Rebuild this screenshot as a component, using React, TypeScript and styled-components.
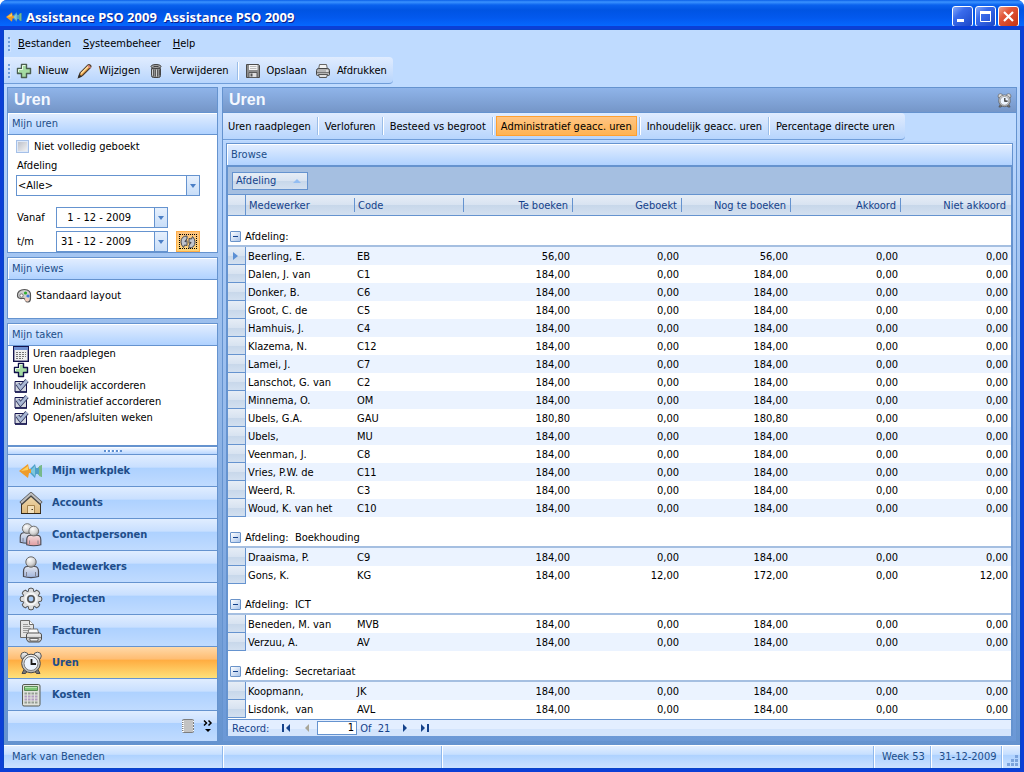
import React from "react";
import styled, { createGlobalStyle, css } from "styled-components";

const line = "#6593cf";
const ink = "#204d89";
const uiFont = '"DejaVu Sans Condensed", "DejaVu Sans", Tahoma, sans-serif';

const GlobalStyle = createGlobalStyle`
  * { box-sizing: border-box; }
  body { margin: 0; background: #fff; font: 11px/14px ${uiFont}; color: #000; }
  button, input, select { font: inherit; color: inherit; margin: 0; }
  button { cursor: default; }
  svg { display: block; flex: none; }
`;

/* ---------- window frame ---------- */

const Window = styled.div`
  display: flex;
  flex-direction: column;
  min-height: 100vh;
  border-radius: 7px 7px 0 0;
  overflow: hidden;
  background: #0a4ee4;
`;

const TitleBar = styled.header`
  display: flex;
  align-items: center;
  height: 30px;
  padding: 3px 5px 0 6px;
  background: linear-gradient(#0a5fe8 0, #3b93ff 2px, #0a62ee 5px, #0054e3 10px, #0359ee 18px, #0568ff 26px, #0450d8 30px);
`;

const TitleText = styled.h1`
  flex: 1;
  margin: 0 0 0 4px;
  font: 700 13px/18px "Noto Sans", sans-serif;
  color: #fff;
  text-shadow: 1px 1px 0 #0a1f8c;
  white-space: pre;
`;

const Caption = styled.button<{ $close?: boolean }>`
  display: grid;
  place-items: center;
  width: 21px;
  height: 21px;
  margin-left: 2px;
  padding: 0;
  border: 1px solid #fff;
  border-radius: 3px;
  background: ${(p) =>
    p.$close
      ? "linear-gradient(135deg, #f0a088 0, #e2573a 35%, #c63312 100%)"
      : "linear-gradient(135deg, #86a9f8 0, #3a6cec 35%, #1c48c8 100%)"};
`;

const Client = styled.div`
  display: flex;
  flex-direction: column;
  flex: 1;
  margin: 0 4px 4px;
  background: #bfdbff;
  box-shadow: 0 0 0 1px #0844c8, 0 0 0 4px #0b3fd6;
`;

const Grip = styled.i<{ $gap: number }>`
  width: 2px;
  height: 14px;
  margin-right: ${(p) => p.$gap}px;
  background: repeating-linear-gradient(#6f9dd9 0 2px, transparent 2px 4px);
  box-shadow: 1px 1px 0 #e6f0ff66;
`;

const MenuBar = styled.nav`
  display: flex;
  align-items: center;
  height: 27px;
  padding-left: 4px;
`;

const MenuItem = styled.button`
  margin-right: 12px;
  padding: 0;
  border: 0;
  background: none;
`;

const barFace = "linear-gradient(#e0ecff 0, #cfe2fd 45%, #b7d5fd 100%)";

const ToolBar = styled.div`
  display: flex;
  align-items: center;
  align-self: flex-start;
  height: 27px;
  margin-bottom: 3px;
  padding: 1px 6px 0 4px;
  border-bottom: 1px solid #6f9dd9;
  border-radius: 0 4px 4px 0;
  background: ${barFace};
`;

const ToolButton = styled.button`
  display: flex;
  align-items: center;
  gap: 6px;
  height: 22px;
  margin-right: 8px;
  padding: 0;
  border: 0;
  background: none;
  &:last-child { margin-right: 0; }
`;

const Divider = styled.i`
  width: 2px;
  height: 18px;
  margin-right: 6px;
  border-left: 1px solid #9abde8;
  background: #fff;
`;

/* ---------- body ---------- */

const Body = styled.div`
  display: flex;
  flex: 1;
  gap: 4px;
  padding: 0 3px 4px;
  background: linear-gradient(#bad7fe, #6593cf);
`;

const Sidebar = styled.aside`
  display: flex;
  flex-direction: column;
  width: 211px;
  flex: none;
`;

const PanelHeader = styled.header`
  display: flex;
  align-items: center;
  justify-content: space-between;
  height: 26px;
  padding: 0 4px 0 6px;
  border: 1px solid ${line};
  background: linear-gradient(#8fb4e9, #7596c8);
  h2 {
    margin: 0;
    font: 700 16px/22px "Liberation Sans", Arial, sans-serif;
    color: #f4f8ff;
  }
`;

const Group = styled.section<{ $first?: boolean; $grow?: boolean }>`
  border: 1px solid ${line};
  background: #fff;
  ${(p) => (p.$first ? "border-top: 0;" : "margin-top: 4px;")}
  ${(p) => p.$grow && css`
    flex: 1;
    border-bottom-width: 2px;
  `}
`;

const GroupTitle = styled.h3`
  margin: 0;
  height: 22px;
  padding: 0 4px;
  border-bottom: 1px solid ${line};
  background: linear-gradient(#e3eeff, #b0d2ff);
  box-shadow: inset 1px 1px 0 #fff;
  font: 11px/21px ${uiFont};
  color: ${ink};
`;

const Filters = styled.form`
  display: flex;
  flex-direction: column;
  height: 117px;
  padding: 5px 17px 0 8px;
`;

const CheckLine = styled.label`
  display: flex;
  align-items: center;
  gap: 5px;
  height: 13px;
  input {
    appearance: none;
    width: 13px;
    height: 13px;
    border: 1px solid #a5c0e8;
    background: linear-gradient(135deg, #b8bcc6, #f6f6f6);
    background-clip: content-box;
    padding: 1px;
    box-shadow: inset 0 0 0 1px #dfe9f8;
  }
`;

const FieldLabel = styled.label`
  margin: 6px 0 2px 1px;
`;

const control = css`
  height: 21px;
  border: 1px solid ${line};
  background: #fff;
`;

const Combo = styled.div`
  ${control}
  display: flex;
  flex: none;
  position: relative;
  margin-bottom: 11px;
  select {
    appearance: none;
    flex: 1;
    padding: 0 1px;
    border: 0;
    background: none;
    outline: 0;
  }
  > span {
    position: absolute;
    right: 0;
    top: 0;
    pointer-events: none;
  }
`;

const Drop = styled.span`
  display: grid;
  place-items: center;
  width: 13px;
  height: 19px;
  border-left: 1px solid ${line};
  background: linear-gradient(#e6f0fd, #c9def8);
`;

const DateLine = styled.div`
  display: grid;
  grid-template-columns: 39px 112px 32px;
  align-items: center;
  margin: 0 0 3px 1px;
  &:last-child { margin-bottom: 0; }
`;

const DateBox = styled.div`
  ${control}
  display: flex;
  input {
    flex: 1;
    min-width: 0;
    padding: 0 4px;
    border: 0;
    background: none;
    outline: 0;
    white-space: pre;
  }
`;

const DropButton = styled.button`
  padding: 0;
  border: 0;
  background: none;
`;

const Refresh = styled.button`
  display: grid;
  place-items: center;
  width: 24px;
  height: 21px;
  margin-left: 8px;
  padding: 0;
  border: 1px solid #ffae48;
  background: linear-gradient(#ffc27c, #ffd678);
  outline: 1px dotted #000;
  outline-offset: -4px;
`;

const ViewBox = styled.div`
  height: 38px;
  padding: 8px;
`;

const ViewItem = styled.button`
  display: flex;
  align-items: center;
  gap: 4px;
  padding: 0;
  border: 0;
  background: none;
`;

const TaskList = styled.ul`
  list-style: none;
  margin: 0;
  padding: 0 5px;
`;

const TaskItem = styled.button`
  display: flex;
  align-items: center;
  gap: 4px;
  height: 16px;
  padding: 0;
  border: 0;
  background: none;
`;

const Splitter = styled.div`
  display: grid;
  place-items: center;
  height: 8px;
  border: solid ${line};
  border-width: 0 1px 1px;
  background: linear-gradient(#fff 0, #e3eeff 2px, #b9d7ff);
  i {
    width: 18px;
    height: 2px;
    background: repeating-linear-gradient(90deg, #5f8fd0 0 2px, #fff 2px 3px, transparent 3px 4px);
  }
`;

const blueFace = "linear-gradient(#e0edff 0, #c8dfff 40%, #add1ff 41%, #c0dbff 100%)";
const goldFace = "linear-gradient(#ffd9a8 0, #ffbc70 40%, #ffab3f 41%, #fee17a 100%)";

const NavButton = styled.button<{ $active?: boolean }>`
  display: flex;
  align-items: center;
  gap: 9px;
  width: 100%;
  height: 32px;
  padding: 0 11px;
  border: solid ${line};
  border-width: 0 1px 1px;
  background: ${(p) => (p.$active ? goldFace : blueFace)};
  font: 700 11px/14px ${uiFont};
  color: ${ink};
`;

const NavFooter = styled.div`
  display: flex;
  align-items: center;
  justify-content: flex-end;
  gap: 8px;
  height: 30px;
  padding-right: 4px;
  border: solid ${line};
  border-width: 0 1px;
  background: ${blueFace};
  button { padding: 0; border: 0; background: none; }
`;

/* ---------- main panel ---------- */

const Main = styled.main`
  display: flex;
  flex-direction: column;
  flex: 1;
  min-width: 0;
`;

const MainBody = styled.div`
  display: flex;
  flex-direction: column;
  flex: 1;
  padding-bottom: 5px;
  border: solid ${line};
  border-width: 0 1px;
  background: linear-gradient(#bdd9ff, #6b98d6);
`;

const TabStrip = styled.div`
  height: 28px;
  background: #bfdbff;
`;

const Tabs = styled.nav`
  display: flex;
  align-items: center;
  width: fit-content;
  height: 27px;
  padding: 0 6px 0 1px;
  border-bottom: 1px solid #6f9dd9;
  border-radius: 0 4px 4px 0;
  background: ${barFace};
`;

const Tab = styled.button<{ $active?: boolean }>`
  height: 20px;
  padding: 2px ${(p) => (p.$active ? 4 : 3)}px 0;
  border: 1px solid ${(p) => (p.$active ? "#ffa030" : "transparent")};
  background: ${(p) => (p.$active ? "linear-gradient(#ffc583, #ffb353)" : "none")};
  white-space: nowrap;
`;

const TabDivider = styled(Divider)`
  margin: 0 2px;
`;

const Browse = styled.section`
  display: flex;
  flex-direction: column;
  flex: 1;
  margin: 2px 3px 0;
  border: solid ${line};
  border-width: 1px 1px 0;
`;

const BrowseTitle = styled(GroupTitle)`
  height: 23px;
  border-bottom-width: 2px;
`;

const Grid = styled.div`
  flex: 1;
  display: flex;
  flex-direction: column;
  border: solid ${line};
  border-width: 0 1px;
  background: #fff;
`;

const GroupBy = styled.div`
  height: 28px;
  padding: 5px 4px;
  border-bottom: 1px solid ${line};
  background: #a5bfe1;
`;

const metal = "linear-gradient(#e6edf6 0, #d8e3f1 50%, #c7d7ea 51%, #d3e0f0 100%)";

const GroupKey = styled.button`
  display: flex;
  align-items: center;
  justify-content: space-between;
  width: 76px;
  height: 18px;
  padding: 0 6px 0 3px;
  border: 1px solid ${line};
  background: ${metal};
  color: #15428b;
`;

const Table = styled.table`
  width: 100%;
  table-layout: fixed;
  border-collapse: separate;
  border-spacing: 0;
  th, td { padding: 0; font-weight: 400; white-space: pre; }
`;

const HeadCell = styled.th<{ $num?: boolean; $first?: boolean; $last?: boolean }>`
  height: 21px;
  border-bottom: 1px solid ${line};
  background: ${metal};
  color: #15428b;
  text-align: ${(p) => (p.$num ? "right" : "left")};
  span {
    display: block;
    height: 14px;
    padding: 0 4px 0 3px;
    line-height: 16px;
    border-right: 1px solid ${(p) => (p.$last ? "transparent" : line)};
  }
  ${(p) => p.$first && `border-right: 1px solid ${line};`}
`;

const GroupCell = styled.td`
  height: 31px;
  border-bottom: 2px solid #a5bfe1;
  div {
    display: flex;
    align-items: center;
    gap: 4px;
    padding: 12px 0 0 2px;
  }
`;

const Expander = styled.button`
  display: grid;
  place-items: center;
  width: 11px;
  height: 11px;
  padding: 0;
  border: 1px solid #6a93c9;
  border-radius: 1px;
  background: linear-gradient(135deg, #fff, #a9c4ea);
  &::before { content: ""; width: 5px; height: 1px; background: #15428b; }
`;

const Row = styled.tr<{ $tint: boolean }>`
  background: ${(p) => (p.$tint ? "#ebf3ff" : "#fff")};
`;

const Marker = styled.td`
  height: 18px;
  border: solid ${line};
  border-width: 0 1px 1px 0;
  background: ${metal};
  svg { margin: 0 5px; }
`;

const Cell = styled.td<{ $num?: boolean }>`
  text-align: ${(p) => (p.$num ? "right" : "left")};
  && { padding: 2px 3px 0 ${(p) => (p.$num ? 0 : 2)}px; }
`;

const Pager = styled.footer`
  display: flex;
  align-items: center;
  height: 17px;
  margin-top: auto;
  padding-left: 4px;
  border-top: 1px solid ${line};
  background: linear-gradient(#e3eeff 55%, #d3e4fc 56%);
  color: #15428b;
  button { width: 9px; padding: 0; border: 0; background: none; }
  input {
    width: 40px;
    height: 14px;
    padding: 0 2px;
    border: 1px solid ${line};
    background: #fff;
    color: #000;
    text-align: right;
    outline: 0;
  }
`;

const PagerSlot = styled.span<{ $w: number }>`
  width: ${(p) => p.$w}px;
  padding-top: 1px;
  white-space: pre;
`;

/* ---------- status bar ---------- */

const StatusBar = styled.footer`
  display: flex;
  height: 23px;
  border-top: 1px solid #fff;
  background: linear-gradient(#e2eeff 0, #c6dfff 38%, #aed2ff 42%, #cbe1ff 100%);
  color: ${ink};
`;

const StatusCell = styled.div<{ $w?: number }>`
  display: flex;
  align-items: center;
  padding: 0 8px;
  border-right: 1px solid #8fb8ec;
  box-shadow: 1px 0 0 #fff;
  white-space: nowrap;
  ${(p) => (p.$w ? `width: ${p.$w}px;` : "flex: 1;")}
`;

const SizeGrip = styled.div`
  display: flex;
  align-items: flex-end;
  padding: 0 2px 2px 5px;
`;

/* ---------- icons ---------- */

const Logo = ({ w, h }: { w: number; h: number }) => (
  <svg width={w} height={h} viewBox="0 0 24 16">
    <path d="M15 8l5-4 3-2v12l-3-2z" fill="#4f9f68" />
    <path d="M20 3l3-1v12l-3-1z" fill="#77b98a" />
    <path d="M9 8l7-7 1 4h3v6h-3l-1 4z" fill="#4fa0c8" />
    <path d="M11 8l5-5v10z" fill="#7cc7df" />
    <path d="M0 8l9-7 1 5h2v4h-2l-1 5z" fill="#ee9c2b" />
    <path d="M2 8l7-5v4z" fill="#ffd25c" />
  </svg>
);

const PlusIcon = ({ dark }: { dark?: boolean }) => (
  <svg width="16" height="16" viewBox="0 0 16 16">
    <path
      d="M5.500 1.500h5v4h4v5h-4v4h-5v-4h-4v-5h4z"
      fill="#a5dba2"
      stroke={dark ? "#10104a" : "#4b5f50"}
      strokeWidth="1.400"
      strokeLinejoin="round"
    />
    <path d="M6.500 6.500v-4h3M2.500 9v-2.500h4" fill="none" stroke="#e8f9e4" />
  </svg>
);

const PencilIcon = () => (
  <svg width="16" height="16" viewBox="0 0 16 16">
    <path d="M1.500 14.500l1.500-4.500 8-8q1-1 2.300.2t.2 2.300l-8 8z" fill="#f0a94e" stroke="#4e3b2a" strokeWidth="1.200" />
    <path d="M4 10.500l7.500-7.500" stroke="#ffe0a3" strokeWidth="1.500" />
    <path d="M1 15l1.200-4 2.800 2.800z" fill="#2c2c2c" />
    <path d="M11 2.500l2.500 2.500" stroke="#d98080" strokeWidth="1.500" />
  </svg>
);

const TrashIcon = () => (
  <svg width="16" height="16" viewBox="0 0 16 16">
    <path d="M3.500 5.500h9v7q0 2-2 2h-5q-2 0-2-2z" fill="#8f8f8f" stroke="#444" />
    <path d="M5.500 6.500v7M7.500 6.500v7M9.500 6.500v7M11.500 6.500v6" stroke="#5a5a5a" />
    <path d="M4.500 6.500v6M8.500 6.500v7" stroke="#d0d0d0" />
    <ellipse cx="8" cy="3.500" rx="5" ry="2" fill="#aaa" stroke="#3e3e3e" />
    <path d="M5.500 3.500h5M6.500 1.500h3" stroke="#444" />
  </svg>
);

const SaveIcon = () => (
  <svg width="16" height="16" viewBox="0 0 16 16">
    <path d="M1.500 1.500h12l1 1v12h-13z" fill="#8d8d8d" stroke="#4c4c4c" />
    <path d="M4 2h8.500v5H4z" fill="#f5f5f5" />
    <path d="M5 3.500h6.500M5 5.500h6.500" stroke="#bbb" />
    <path d="M4 9.500h8v5H4z" fill="#dedede" stroke="#5a5a5a" />
    <path d="M5.500 10.500h2v3h-2z" fill="#555" />
  </svg>
);

const PrintIcon = () => (
  <svg width="16" height="16" viewBox="0 0 16 16">
    <path d="M4.500 1.500h7l1 5h-9z" fill="#f2f2f2" stroke="#666" />
    <path d="M1.500 7.500q0-2 2-2h9q2 0 2 2v4q0 1-1 1h-11q-1 0-1-1z" fill="#b5b5b5" stroke="#474747" />
    <path d="M2 9.500h12" stroke="#777" />
    <path d="M3.500 11.500h9l-1 3h-7z" fill="#e0e0e0" stroke="#555" />
    <path d="M11 8h2" stroke="#fff" />
  </svg>
);

const PaletteIcon = () => (
  <svg width="16" height="16" viewBox="0 0 16 16">
    <path
      d="M1.500 8C1 4 4 1.500 8.500 1.500s6.500 3 6 6c-.3 3 1 6-2.500 6.500-3 .3-2-3-4-3.500S2 12 1.500 8z"
      fill="#cfcfcf"
      stroke="#555"
      strokeWidth="1.200"
    />
    <circle cx="5.500" cy="7.500" r="1.700" fill="#fff" stroke="#777" />
    <circle cx="9.500" cy="5" r="1.600" fill="#2fae2f" />
    <circle cx="12" cy="8" r="1.600" fill="#3e7be0" />
    <circle cx="11" cy="11.500" r="2" fill="#f3cdbb" />
  </svg>
);

const CalendarIcon = () => (
  <svg width="16" height="16" viewBox="0 0 16 16">
    <rect x=".7" y=".7" width="14.600" height="14.600" fill="#f0f0f0" stroke="#14144e" strokeWidth="1.400" />
    <path d="M1 1h14v3H1z" fill="#6d8fd2" />
    <path d="M3 6.500h10M3 8.500h10M3 10.500h10M3 12.500h7" stroke="#777" strokeDasharray="2 1" />
  </svg>
);

const CheckIcon = () => (
  <svg width="16" height="16" viewBox="0 0 16 16">
    <path d="M2 3.500h11.500v10.500H2z" fill="#d3d7df" stroke="#14144e" />
    <path d="M2 14h12" stroke="#14144e" strokeWidth="1.500" />
    <path d="M4.500 6l3 4 6.500-7.500" fill="none" stroke="#30355e" strokeWidth="4.400" />
    <path d="M4.500 6l3 4 6.500-7.500" fill="none" stroke="#a9b8d4" strokeWidth="2.800" />
  </svg>
);

const RefreshIcon = () => (
  <svg width="16" height="14" viewBox="0 0 16 14">
    <path
      d="M7 1q-6 0-6 6 0 3 2.500 5.500l1-2.500 2.500.5V5.500L5 7q0-2 2-3zM9 13q6 0 6-6 0-3-2.500-5.500L11.500 4 9 3.500v5L11 7q0 2-2 3z"
      fill="#c0c4cc"
      stroke="#414652"
    />
  </svg>
);

const Shades = () => (
  <defs>
    <radialGradient id="pearl" cx=".38" cy=".3" r=".75">
      <stop offset="0" stopColor="#fdfdfd" />
      <stop offset=".6" stopColor="#d4d4d4" />
      <stop offset="1" stopColor="#8e8e8e" />
    </radialGradient>
    <linearGradient id="steel" x1="0" y1="0" x2="0" y2="1">
      <stop offset="0" stopColor="#f4f4f4" />
      <stop offset="1" stopColor="#b0b0b0" />
    </linearGradient>
    <linearGradient id="blueCoat" x1="0" y1="0" x2="0" y2="1">
      <stop offset="0" stopColor="#e3e6ee" />
      <stop offset="1" stopColor="#9fb4dc" />
    </linearGradient>
    <linearGradient id="redCoat" x1="0" y1="0" x2="0" y2="1">
      <stop offset="0" stopColor="#f2dede" />
      <stop offset="1" stopColor="#e29a9f" />
    </linearGradient>
    <linearGradient id="wall" x1="0" y1="0" x2="0" y2="1">
      <stop offset="0" stopColor="#f2dcb2" />
      <stop offset="1" stopColor="#dcb87c" />
    </linearGradient>
  </defs>
);

const SharedShades = styled.svg`
  position: absolute;
  width: 0;
  height: 0;
`;

const HouseIcon = () => (
  <svg width="24" height="24" viewBox="0 0 24 24">
    <path d="M2.500 11.500L12 3l9.500 8.500v11h-19z" fill="url(#wall)" stroke="#3f3220" />
    <path d="M1.800 12.500L12 3.200l10.200 9.300" fill="none" stroke="#474747" strokeWidth="4" strokeLinejoin="round" />
    <path d="M2 11.700L12 2.800l10 8.900" fill="none" stroke="#bdbdbd" strokeWidth="2.200" strokeLinejoin="round" />
    <path d="M8.500 14.500h7v8h-7z" fill="#f3e0bb" stroke="#a5834c" />
    <path d="M12.500 18.500h1.500" stroke="#4a3a20" />
    <path d="M2 22.500h20" stroke="#2f2516" />
  </svg>
);

const Person = ({ coat }: { coat: string }) => (
  <>
    <path d="M4.500 21.500v-5q0-5 4-5h7q4 0 4 5v5q-7.500 2.200-15 0z" fill={`url(#${coat})`} stroke="#4a4a52" strokeWidth="1.200" />
    <path d="M7.500 21v-4M16.500 21v-4" stroke="#80808c" />
    <circle cx="12" cy="7" r="5.200" fill="url(#pearl)" stroke="#6a6a6a" />
  </>
);

const PersonIcon = () => (
  <svg width="24" height="24" viewBox="0 0 24 24"><Person coat="blueCoat" /></svg>
);

const PeopleIcon = () => (
  <svg width="24" height="24" viewBox="0 0 24 24">
    <g transform="translate(-3 -1) scale(.94)"><Person coat="blueCoat" /></g>
    <g transform="translate(3.500 1.500) scale(.94)"><Person coat="redCoat" /></g>
  </svg>
);

const GearIcon = () => (
  <svg width="24" height="24" viewBox="0 0 24 24">
    {[0, 45, 90, 135, 180, 225, 270, 315].map((a) => (
      <path
        key={a}
        d="M9 6l.8-4.300q2.200-1.200 4.400 0L15 6z"
        fill="#dedede"
        stroke="#555"
        transform={`rotate(${a} 12 12)`}
      />
    ))}
    <circle cx="12" cy="12" r="7.800" fill="#dcdcdc" />
    <circle cx="12" cy="12" r="5.500" fill="none" stroke="#f6f6f6" strokeWidth="2" />
    <circle cx="12" cy="12" r="3.200" fill="#a9ccf8" stroke="#555" strokeWidth="1.600" />
  </svg>
);

const InvoiceIcon = () => (
  <svg width="24" height="24" viewBox="0 0 24 24">
    <path d="M1.500 1.500h9l4 4v13h-13z" fill="#e4e4e4" stroke="#6b6b6b" />
    <path d="M10.500 1.500v4h4" fill="#fff" stroke="#6b6b6b" />
    <path d="M4 5.500h5M4 7.500h7M4 9.500h8M4 11.500h6M4 13.500h4" stroke="#9a9a9a" />
    <path d="M10 10h8.500l1.500 5.500H8.500z" fill="#fafafa" stroke="#777" />
    <path d="M7.500 16q0-2 2-2h11q2 0 2 2v4.500L20.500 23H9.500l-2-2.500z" fill="url(#steel)" stroke="#4f4f4f" />
    <path d="M8 18.500h14" stroke="#808080" />
    <path d="M10.500 19.500h9l-1 2.500h-7z" fill="#f2f2f2" stroke="#6b6b6b" />
  </svg>
);

const ClockIcon = ({ size = 24 }: { size?: number }) => (
  <svg width={size} height={size} viewBox="0 0 24 24">
    <path d="M5 18.500l-2 4h3.500l2-2.500M19 18.500l2 4h-3.500l-2-2.500" fill="#777" stroke="#484848" />
    <circle cx="5.500" cy="5" r="3.800" fill="url(#steel)" stroke="#5a5a5a" />
    <circle cx="18.500" cy="5" r="3.800" fill="url(#steel)" stroke="#5a5a5a" />
    <circle cx="12" cy="12.500" r="9.300" fill="url(#steel)" stroke="#4a4a4a" />
    <circle cx="12" cy="12.500" r="7" fill="#eef5ff" stroke="#7a7a7a" />
    <path d="M12.500 8v5H17" fill="none" stroke="#1c1c1c" strokeWidth="1.800" />
  </svg>
);

const CalculatorIcon = () => (
  <svg width="24" height="24" viewBox="0 0 24 24">
    <rect x="3.500" y="1.500" width="17.500" height="21.500" rx="1.500" fill="#dfe2dc" stroke="#565b53" />
    <path d="M5.500 3.500h13v4h-13z" fill="#7cc675" stroke="#5a8a56" />
    <path d="M6 4.500h12" stroke="#b5e5af" />
    {[10.5, 13.5, 16.5, 19.5].map((y) => (
      <path
        key={y}
        d={`M5.500 ${y}h13`}
        stroke={y === 13.5 || y === 16.5 ? "#b29cc0" : "#959d93"}
        strokeWidth="2"
        strokeDasharray="2.500 1"
      />
    ))}
  </svg>
);

const NotebookIcon = () => (
  <svg width="14" height="14" viewBox="0 0 14 14">
    <rect x="1.500" y=".5" width="11" height="13" rx="1" fill="#c3c3c3" stroke="#7d7d7d" />
    <path d="M2 2v11" stroke="#fff" strokeWidth="2" strokeDasharray="1 1" />
    <path d="M12.500 2v11" stroke="#fff" strokeDasharray="1 2" />
  </svg>
);

const ChevronsIcon = () => (
  <svg width="10" height="14" viewBox="0 0 10 14">
    <path d="M1 1.500L3.500 4 1 6.500M5.500 1.500L8 4 5.500 6.500" fill="none" stroke="#000" strokeWidth="1.500" />
    <path d="M2 10h6l-3 3z" />
  </svg>
);

const Arrow = ({ d, fill = "#15428b", w = 9 }: { d: string; fill?: string; w?: number }) => (
  <svg width={w} height="8" viewBox={`0 0 ${w} 8`}><path d={d} fill={fill} /></svg>
);

const DropArrow = () => (
  <svg width="6" height="4" viewBox="0 0 6 4"><path d="M0 0h6L3 4z" fill="#4b7fc6" /></svg>
);

/* ---------- data ---------- */

const tasks = [
  ["Uren raadplegen", <CalendarIcon />],
  ["Uren boeken", <PlusIcon dark />],
  ["Inhoudelijk accorderen", <CheckIcon />],
  ["Administratief accorderen", <CheckIcon />],
  ["Openen/afsluiten weken", <CheckIcon />],
] as const;

const modules = [
  ["Mijn werkplek", <Logo w={24} h={16} />],
  ["Accounts", <HouseIcon />],
  ["Contactpersonen", <PeopleIcon />],
  ["Medewerkers", <PersonIcon />],
  ["Projecten", <GearIcon />],
  ["Facturen", <InvoiceIcon />],
  ["Uren", <ClockIcon />],
  ["Kosten", <CalculatorIcon />],
] as const;

const tabs = [
  "Uren raadplegen",
  "Verlofuren",
  "Besteed vs begroot",
  "Administratief geacc. uren",
  "Inhoudelijk geacc. uren",
  "Percentage directe uren",
];

const columns = ["Medewerker", "Code", "Te boeken", "Geboekt", "Nog te boeken", "Akkoord", "Niet akkoord"];
const columnWidths = [18, 109, 109, 109, 109, 109, 110, 110];

type Employee = [name: string, code: string, planned?: string, booked?: string, open?: string, ok?: string, notOk?: string];

const groups: { title: string; rows: Employee[] }[] = [
  {
    title: "Afdeling:",
    rows: [
      ["Beerling, E.", "EB", "56,00", "0,00", "56,00"],
      ["Dalen, J. van", "C1"],
      ["Donker, B.", "C6"],
      ["Groot, C. de", "C5"],
      ["Hamhuis, J.", "C4"],
      ["Klazema, N.", "C12"],
      ["Lamei, J.", "C7"],
      ["Lanschot, G. van", "C2"],
      ["Minnema, O.", "OM"],
      ["Ubels, G.A.", "GAU", "180,80", "0,00", "180,80"],
      ["Ubels,", "MU"],
      ["Veenman, J.", "C8"],
      ["Vries, P.W. de", "C11"],
      ["Weerd, R.", "C3"],
      ["Woud, K. van het", "C10"],
    ],
  },
  {
    title: "Afdeling:  Boekhouding",
    rows: [
      ["Draaisma, P.", "C9"],
      ["Gons, K.", "KG", "184,00", "12,00", "172,00", "0,00", "12,00"],
    ],
  },
  {
    title: "Afdeling:  ICT",
    rows: [
      ["Beneden, M. van", "MVB"],
      ["Verzuu, A.", "AV"],
    ],
  },
  {
    title: "Afdeling:  Secretariaat",
    rows: [
      ["Koopmann,", "JK"],
      ["Lisdonk,  van", "AVL"],
    ],
  },
];

const DataTable = () => {
  let position = -1;
  return (
    <Table>
      <colgroup>
        {columnWidths.map((w, i) => <col key={i} width={w} />)}
      </colgroup>
      <thead>
        <tr>
          <HeadCell $first aria-label="Rij" />
          {columns.map((c, i) => (
            <HeadCell key={c} scope="col" $num={i > 1} $last={i === 6}><span>{c}</span></HeadCell>
          ))}
        </tr>
      </thead>
      {groups.map((g) => {
        position += 1;
        return (
          <tbody key={g.title}>
            <tr>
              <GroupCell colSpan={8}>
                <div><Expander aria-label="Groep inklappen" />{g.title}</div>
              </GroupCell>
            </tr>
            {g.rows.map(([name, code, planned = "184,00", booked = "0,00", open = "184,00", ok = "0,00", notOk = "0,00"]) => {
              position += 1;
              return (
                <Row key={name} $tint={position % 2 === 1}>
                  <Marker>{position === 1 && <Arrow w={5} fill="#5b8fd4" d="M0 0l5 4-5 4z" />}</Marker>
                  <Cell>{name}</Cell>
                  <Cell>{code}</Cell>
                  {[planned, booked, open, ok, notOk].map((v, i) => <Cell key={i} $num>{v}</Cell>)}
                </Row>
              );
            })}
          </tbody>
        );
      })}
    </Table>
  );
};

export default function App() {
  return (
    <>
      <GlobalStyle />
      <SharedShades aria-hidden="true"><Shades /></SharedShades>
      <Window>
        <TitleBar>
          <Logo w={16} h={12} />
          <TitleText>Assistance PSO 2009  Assistance PSO 2009</TitleText>
          <Caption aria-label="Minimaliseren">
            <svg width="13" height="13"><path d="M1 9h7v3H1z" fill="#fff" /></svg>
          </Caption>
          <Caption aria-label="Maximaliseren">
            <svg width="13" height="13"><path d="M1.500 2v9.500h10V2" fill="none" stroke="#fff" /><path d="M1 1h11v3H1z" fill="#fff" /></svg>
          </Caption>
          <Caption $close aria-label="Sluiten">
            <svg width="13" height="13"><path d="M2 2l9 9M11 2l-9 9" stroke="#fff" strokeWidth="2.200" /></svg>
          </Caption>
        </TitleBar>

        <Client>
          <MenuBar>
            <Grip $gap={8} />
            <MenuItem><u>B</u>estanden</MenuItem>
            <MenuItem><u>S</u>ysteembeheer</MenuItem>
            <MenuItem><u>H</u>elp</MenuItem>
          </MenuBar>
          <ToolBar>
            <Grip $gap={6} />
            <ToolButton><PlusIcon />Nieuw</ToolButton>
            <ToolButton><PencilIcon />Wijzigen</ToolButton>
            <ToolButton><TrashIcon />Verwijderen</ToolButton>
            <Divider />
            <ToolButton><SaveIcon />Opslaan</ToolButton>
            <ToolButton><PrintIcon />Afdrukken</ToolButton>
          </ToolBar>

          <Body>
            <Sidebar>
              <PanelHeader><h2>Uren</h2></PanelHeader>
              <Group $first>
                <GroupTitle>Mijn uren</GroupTitle>
                <Filters>
                  <CheckLine><input type="checkbox" />Niet volledig geboekt</CheckLine>
                  <FieldLabel htmlFor="afdeling">Afdeling</FieldLabel>
                  <Combo>
                    <select id="afdeling" defaultValue="alle"><option value="alle">&lt;Alle&gt;</option></select>
                    <Drop><DropArrow /></Drop>
                  </Combo>
                  <DateLine>
                    <label htmlFor="vanaf">Vanaf</label>
                    <DateBox>
                      <input id="vanaf" defaultValue="  1 - 12 - 2009" />
                      <DropButton type="button" aria-label="Kies datum vanaf"><Drop><DropArrow /></Drop></DropButton>
                    </DateBox>
                  </DateLine>
                  <DateLine>
                    <label htmlFor="tot">t/m</label>
                    <DateBox>
                      <input id="tot" defaultValue="31 - 12 - 2009" />
                      <DropButton type="button" aria-label="Kies datum t/m"><Drop><DropArrow /></Drop></DropButton>
                    </DateBox>
                    <Refresh type="button" aria-label="Vernieuwen"><RefreshIcon /></Refresh>
                  </DateLine>
                </Filters>
              </Group>
              <Group>
                <GroupTitle>Mijn views</GroupTitle>
                <ViewBox><ViewItem><PaletteIcon />Standaard layout</ViewItem></ViewBox>
              </Group>
              <Group $grow>
                <GroupTitle>Mijn taken</GroupTitle>
                <TaskList>
                  {tasks.map(([label, icon]) => (
                    <li key={label}><TaskItem>{icon}{label}</TaskItem></li>
                  ))}
                </TaskList>
              </Group>
              <Splitter><i /></Splitter>
              <nav>
                {modules.map(([label, icon]) => (
                  <NavButton key={label} $active={label === "Uren"}>{icon}{label}</NavButton>
                ))}
              </nav>
              <NavFooter>
                <button aria-label="Notities"><NotebookIcon /></button>
                <button aria-label="Meer knoppen"><ChevronsIcon /></button>
              </NavFooter>
            </Sidebar>

            <Main>
              <PanelHeader><h2>Uren</h2><ClockIcon size={15} /></PanelHeader>
              <MainBody>
                <TabStrip>
                  <Tabs>
                    {tabs.map((t, i) => (
                      <React.Fragment key={t}>
                        {i > 0 && <TabDivider />}
                        <Tab $active={i === 3}>{t}</Tab>
                      </React.Fragment>
                    ))}
                  </Tabs>
                </TabStrip>
                <Browse>
                  <BrowseTitle>Browse</BrowseTitle>
                  <Grid>
                    <GroupBy>
                      <GroupKey>Afdeling<Arrow w={8} fill="#93bdf2" d="M0 6l4-4 4 4z" /></GroupKey>
                    </GroupBy>
                    <DataTable />
                    <Pager>
                      <PagerSlot $w={50}>Record:</PagerSlot>
                      <button aria-label="Eerste"><Arrow d="M0 0h2v8H0zM8 0v8L4 4z" /></button>
                      <PagerSlot $w={12} />
                      <button aria-label="Vorige"><Arrow fill="#a9a698" d="M6 0v8L2 4z" /></button>
                      <PagerSlot $w={5} />
                      <input aria-label="Record" defaultValue="1" />
                      <PagerSlot $w={45}> Of  21</PagerSlot>
                      <button aria-label="Volgende"><Arrow d="M1 0v8l4-4z" /></button>
                      <PagerSlot $w={10} />
                      <button aria-label="Laatste"><Arrow d="M0 0v8l4-4zM6 0h2v8H6z" /></button>
                    </Pager>
                  </Grid>
                </Browse>
              </MainBody>
            </Main>
          </Body>

          <StatusBar>
            <StatusCell $w={219}>Mark van Beneden</StatusCell>
            <StatusCell $w={219} />
            <StatusCell />
            <StatusCell $w={57}>Week 53</StatusCell>
            <StatusCell $w={71}>31-12-2009</StatusCell>
            <SizeGrip>
              <svg width="11" height="11" viewBox="0 0 11 11">
                <path d="M8 0h3v3H8zM4 4h3v3H4zM8 4h3v3H8zM0 8h3v3H0zM4 8h3v3H4zM8 8h3v3H8z" fill="#7ba3dc" />
              </svg>
            </SizeGrip>
          </StatusBar>
        </Client>
      </Window>
    </>
  );
}
